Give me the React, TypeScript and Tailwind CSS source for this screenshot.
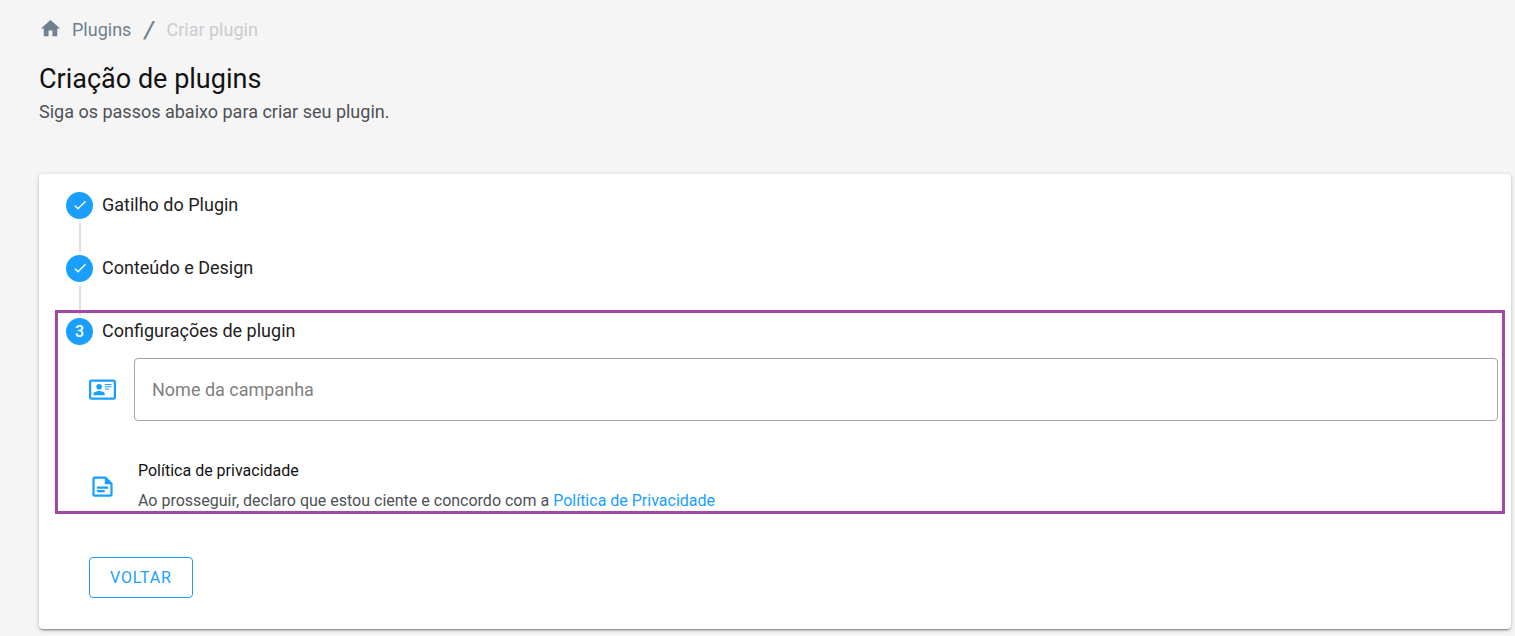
import React from "react";

type IconProps = { path: string; className: string };

const icons = {
  home: "M10 20V14H14V20H19V12H22L12 3L2 12H5V20H10Z",
  check: "M21 7L9 19L3.5 13.5L4.91 12.09L9 16.17L19.59 5.59L21 7Z",
  card: "M22 3H2C.91 3.04.04 3.91 0 5V19C.04 20.09.91 20.96 2 21H22C23.09 20.96 23.96 20.09 24 19V5C23.96 3.91 23.09 3.04 22 3M22 19H2V5H22V19M14 17V15.75C14 14.09 10.66 13.25 9 13.25C7.34 13.25 4 14.09 4 15.75V17H14M9 7A2.5 2.5 0 0 0 6.5 9.5A2.5 2.5 0 0 0 9 12A2.5 2.5 0 0 0 11.5 9.5A2.5 2.5 0 0 0 9 7M14 7V8H20V7H14M14 9V10H20V9H14M14 11V12H18V11H14",
  note: "M15 3H5C3.9 3 3 3.9 3 5V19C3 20.11 3.9 21 5 21H19C20.11 21 21 20.11 21 19V9L15 3M19 19H5V5H14V10H19V19M17 14H7V12H17V14M14 17H7V15H14V17",
};

function Icon({ path, className }: IconProps) {
  return (
    <svg viewBox="0 0 24 24" fill="currentColor" aria-hidden="true" className={className}>
      <path d={path} />
    </svg>
  );
}

function StepHeader({ title, marker }: { title: string; marker: React.ReactNode }) {
  return (
    <div className="flex items-start gap-[9px]">
      <span className="flex size-[27px] shrink-0 items-center justify-center rounded-full bg-[#1a9fff] text-base font-medium text-white">
        {marker}
      </span>
      <h2 className="text-lg leading-[25px] text-[#212121]">{title}</h2>
    </div>
  );
}

function CompletedStep({ title }: { title: string }) {
  return (
    <li>
      <StepHeader title={title} marker={<Icon path={icons.check} className="mb-[2px] size-4" />} />
      <div className="mt-1 mb-[3px] ml-[13px] h-[29px] w-[2px] bg-[#e0e0e0]" />
    </li>
  );
}

export default function App() {
  return (
    <div className="min-h-screen bg-[#f5f5f5] pt-4 pr-1 pb-[7px] pl-[39px] font-[Roboto,sans-serif]">
      <nav aria-label="Breadcrumb" className="flex h-7 items-center text-lg text-[#708090]">
        <Icon path={icons.home} className="mr-[10px] mb-1 size-[23px]" />
        <a href="#plugins">Plugins</a>
        <span aria-hidden="true" className="mx-[13px] text-2xl font-medium italic">/</span>
        <span aria-current="page" className="text-[#c8ccd0]">Criar plugin</span>
      </nav>

      <header className="mt-[17px] mb-[47px]">
        <h1 className="text-[27px] leading-9 text-[#121212]">Criação de plugins</h1>
        <p className="text-lg leading-[30px] text-[#4d5156]">Siga os passos abaixo para criar seu plugin.</p>
      </header>

      <main className="rounded bg-white pt-[18px] pr-[13px] pb-[31px] pl-[27px] shadow-[0_2px_2px_-1px_rgba(0,0,0,0.4),0_1px_4px_0_rgba(0,0,0,0.2)]">
        <ol>
          <CompletedStep title="Gatilho do Plugin" />
          <CompletedStep title="Conteúdo e Design" />
          <li className="relative">
            <div className="pointer-events-none absolute -top-2 -right-[7px] bottom-[2px] -left-[11px] border-3 border-[#a349a4]" />
            <StepHeader title="Configurações de plugin" marker="3" />
            <div className="mt-[13px] ml-[23px] flex items-center gap-[18px]">
              <label htmlFor="campaign" aria-label="Nome da campanha">
                <Icon path={icons.card} className="size-[27px] text-[#1a9fff]" />
              </label>
              <input
                id="campaign"
                type="text"
                placeholder="Nome da campanha"
                className="h-[63px] min-w-0 flex-1 rounded border border-[#a6a6a6] bg-white px-[17px] text-lg text-[#212121] placeholder:text-[#808080]"
              />
            </div>
            <div className="mt-[35px] ml-[23px] flex items-center gap-[22px]">
              <Icon path={icons.note} className="size-[27px] shrink-0 text-[#1a9fff]" />
              <div className="text-base leading-[30px]">
                <h3 className="text-[#121212]">Política de privacidade</h3>
                <p className="text-[#4d5156]">
                  Ao prosseguir, declaro que estou ciente e concordo com a{" "}
                  <a href="#privacidade" className="text-[#1a9fff]">Política de Privacidade</a>
                </p>
              </div>
            </div>
          </li>
        </ol>
        <button
          type="button"
          className="mt-[41px] ml-[23px] h-[41px] rounded border border-[#1a9fff] px-5 text-base tracking-wider text-[#1a9fff]"
        >
          VOLTAR
        </button>
      </main>
    </div>
  );
}
